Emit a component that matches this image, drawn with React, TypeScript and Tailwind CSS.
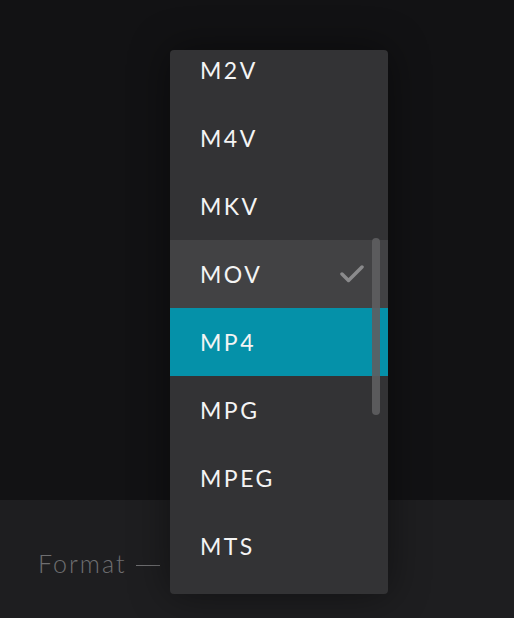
import React, { useLayoutEffect, useRef } from 'react';

const formats = ['M2V', 'M4V', 'MKV', 'MOV', 'MP4', 'MPG', 'MPEG', 'MTS'];

const Check = () => (
  <svg width="24" height="18" viewBox="0 0 24 18" fill="none" stroke="#8a8a8c" strokeWidth="3.5" strokeLinecap="round" strokeLinejoin="round">
    <polyline points="2 9 8.5 15.5 22 2" />
  </svg>
);

const FormatMenu: React.FC<{ selected: string; active: string }> = ({ selected, active }) => {
  const listRef = useRef<HTMLDivElement>(null);

  // keep the list scrolled a little, as in the open menu
  useLayoutEffect(() => {
    if (listRef.current) listRef.current.scrollTop = 14;
  }, []);

  return (
    <div className="absolute left-[170px] top-[50px] w-[218px] h-[544px] rounded-[4px] bg-[#333335] overflow-hidden shadow-[0_0_40px_rgba(0,0,0,0.45)]">
      <div ref={listRef} className="h-full overflow-y-auto [scrollbar-width:none]">
        <ul>
          {formats.map((f) => (
            <li
              key={f}
              className={`h-[68px] flex items-center justify-between pl-[30px] pr-[24px] text-[23px] tracking-[2.5px] text-[#f4f4f4] ${
                f === active ? 'bg-[#0591a9]' : f === selected ? 'bg-[#424244]' : ''
              }`}
            >
              <span>{f}</span>
              {f === selected && <Check />}
            </li>
          ))}
          <li className="h-[28px]" />
        </ul>
      </div>
      <div className="absolute left-[202px] top-[188px] w-[8px] h-[177px] rounded-full bg-[#5e5e60]/90" />
    </div>
  );
};

export default function App() {
  return (
    <div className="relative w-[514px] h-[618px] flex flex-col bg-[#121214] font-['Lato','Open_Sans',sans-serif] overflow-hidden">
      <div className="h-[500px] bg-[#121214]" />
      <div className="flex-1 bg-[#1e1e20] flex items-center pl-[38px] pt-[10px] gap-[9px] text-[#6e6e70]">
        <span className="text-[25px] font-light tracking-[2px]">Format</span>
        <span className="w-[24px] h-[1.5px] bg-[#6e6e70] mt-[3px]" />
      </div>
      <FormatMenu selected="MOV" active="MP4" />
    </div>
  );
}
